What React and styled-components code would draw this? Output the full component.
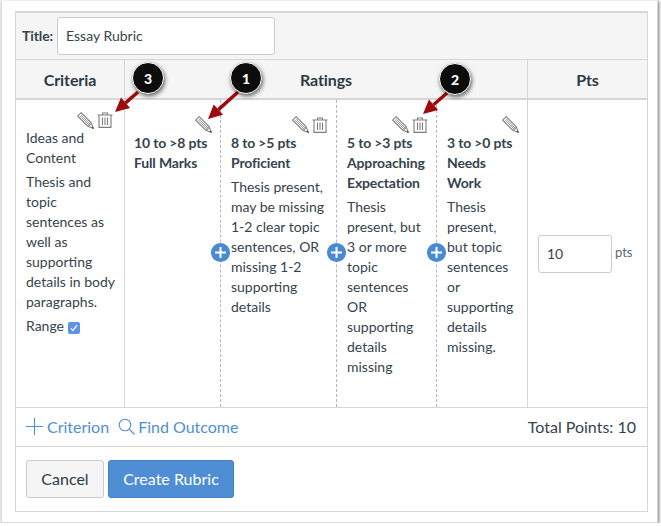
import React from 'react'
import styled, { createGlobalStyle } from 'styled-components'

const GlobalStyle = createGlobalStyle`
  html, body {
    margin: 0;
    padding: 0;
    background: #fff;
    font-family: Lato, "Open Sans", sans-serif;
    color: #36434d;
  }
`

const Frame = styled.div`
  position: relative;
  box-sizing: border-box;
  width: 657px;
  height: 523px;
  margin-left: 1px;
  padding: 10px 9px 10px 13px;
  background: #fff;
  border: 1px solid #d9d9d9;
  border-top-color: #eee;
  box-shadow: 1px 1px 3px rgba(0, 0, 0, 0.55);
`

const Form = styled.div`
  box-sizing: border-box;
  width: 633px;
  height: 501px;
  border: 1px solid #d4d6d8;
  border-top-width: 2px;
  display: flex;
  flex-direction: column;
`

const TitleBar = styled.div`
  height: 47px;
  flex: none;
  box-sizing: border-box;
  display: flex;
  align-items: center;
  gap: 4px;
  padding-left: 6px;
  background: #f5f5f5;
  border-bottom: 1px solid #d4d6d8;
`

const TitleLabel = styled.label`
  font-size: 14px;
  font-weight: 700;
  letter-spacing: -0.1px;
  padding-bottom: 2px;
`

const TextInput = styled.div`
  box-sizing: border-box;
  width: ${({ $w }) => $w}px;
  height: 38px;
  padding: 0 0 2px 8px;
  display: flex;
  align-items: center;
  background: #fff;
  border: 1px solid #c7cdd1;
  border-radius: 3px;
  font-size: 14px;
`

const Columns = styled.div`
  display: grid;
  grid-template-columns: 108px 403px 1fr;
  flex: none;
`

const Head = styled.div`
  height: 40px;
  display: flex;
  align-items: center;
  justify-content: center;
  background: #f5f5f5;
  color: #2d3b45;
  font-size: 16px;
  font-weight: 700;
  letter-spacing: -0.1px;
  border-bottom: 2px solid #d4d6d8;
  border-left: ${({ $first }) => ($first ? 'none' : '1px solid #d4d6d8')};
  box-sizing: border-box;
`

const Body = styled.div`
  height: 308px;
  box-sizing: border-box;
  border-left: ${({ $first }) => ($first ? 'none' : '1px solid #d4d6d8')};
  border-bottom: 1px solid #d4d6d8;
`

const CriteriaCell = styled(Body)`
  padding: 12px 8px 0 10px;
  font-size: 14px;
  line-height: 20px;
`

const CriteriaIcons = styled.div`
  display: flex;
  justify-content: flex-end;
  align-items: center;
  gap: 3px;
  height: 16px;
  padding-right: 3px;
`

const Para = styled.p`
  margin: 0 0 4px;
`

const RatingsRow = styled(Body)`
  display: grid;
  grid-template-columns: 95px 116px 100px 1fr;
`

const Rating = styled.div`
  position: relative;
  box-sizing: border-box;
  padding: 16px 8px 0 ${({ $first }) => ($first ? 9 : 10)}px;
  border-left: ${({ $first }) => ($first ? 'none' : '1px dashed #b4b8bb')};
  font-size: 14px;
  line-height: 20px;
`

const IconRow = styled.div`
  display: flex;
  justify-content: flex-end;
  align-items: center;
  gap: 3px;
  height: 17px;
`

const Bold = styled.div`
  font-weight: 700;
  letter-spacing: -0.15px;
`

const Desc = styled.div`
  margin-top: 4px;
`

const RangeRow = styled.div`
  display: flex;
  align-items: center;
  gap: 4px;
`

const Check = styled.span`
  width: 12px;
  height: 12px;
  margin-top: 3px;
  border-radius: 2px;
  background: #5b93e6;
  display: flex;
  align-items: center;
  justify-content: center;
`

const AddButton = styled.span`
  position: absolute;
  left: -10px;
  top: 143px;
  width: 19px;
  height: 19px;
  border-radius: 50%;
  background: #4a8ad4;
  display: flex;
  align-items: center;
  justify-content: center;
`

const PtsCell = styled(Body)`
  display: flex;
  align-items: flex-start;
  gap: 3px;
  padding: 135px 0 0 10px;
`

const PtsLabel = styled.span`
  font-size: 13px;
  line-height: 35px;
  color: #5a6872;
`

const Footer = styled.div`
  height: 39px;
  flex: none;
  display: flex;
  align-items: center;
  padding: 0 11px 2px 10px;
  border-bottom: 1px solid #d4d6d8;
  box-sizing: border-box;
`

const LinkBtn = styled.span`
  display: flex;
  align-items: center;
  gap: ${({ $gap }) => $gap}px;
  margin-right: 9px;
  color: #4f8fd6;
  font-size: 16px;
`

const Total = styled.span`
  margin-left: auto;
  font-size: 16px;
`

const Actions = styled.div`
  display: flex;
  gap: 4px;
  padding: 13px 0 0 10px;
`

const Btn = styled.button`
  box-sizing: border-box;
  height: 38px;
  width: ${({ $w }) => $w}px;
  padding: 0 0 2px;
  border-radius: 3px;
  font-family: inherit;
  font-size: 16px;
  background: ${({ $primary }) => ($primary ? '#4f8dd5' : '#f5f5f5')};
  color: ${({ $primary }) => ($primary ? '#fff' : '#2d3b45')};
  border: 1px solid ${({ $primary }) => ($primary ? '#4580c4' : '#c7cdd1')};
`

const Overlay = styled.svg`
  position: absolute;
  left: -2px;
  top: -1px;
  width: 661px;
  height: 526px;
  pointer-events: none;
`

const Badge = styled.span`
  position: absolute;
  left: ${({ $x }) => $x - 18}px;
  top: ${({ $y }) => $y - 17}px;
  width: 32px;
  height: 32px;
  box-sizing: border-box;
  border-radius: 50%;
  background: #0c0c0c;
  border: 1px solid #fff;
  box-shadow: 1px 2px 4px rgba(0, 0, 0, 0.6);
  color: #fff;
  font-size: 14px;
  font-weight: 900;
  display: flex;
  align-items: center;
  justify-content: center;
`

const Pencil = () => (
  <svg width="17" height="17" viewBox="0 0 17 17" fill="none" stroke="#7d7d7d" strokeWidth="1.1">
    <path d="M.7 4.2 4.2.7 14 10.5l2.4 5.9-5.9-2.4z" fill="#fff" />
    <path d="M5.2 4.2 14 13M4.2 5.2 13 14M2.6 5.6 5.6 2.6M10.8 13.8l3-3" strokeWidth="0.8" />
    <path d="M15 15l1.2 1.2" strokeWidth="1.5" stroke="#555" />
  </svg>
)

const Trash = () => (
  <svg width="16" height="16" viewBox="0 0 16 16" fill="none" stroke="#7d7d7d" strokeWidth="1.1">
    <path d="M.5 3h15M5.5 3V1h5v2" />
    <path d="M2 3v12.4h12V3" />
    <path d="M5.5 5.5v7.5M8 5.5v7.5M10.5 5.5v7.5" />
  </svg>
)

const PlusThin = () => (
  <svg width="17" height="17" viewBox="0 0 17 17" stroke="#4f8fd6" strokeWidth="1.1">
    <path d="M0 8.5h17M8.5 0v17" />
  </svg>
)

const SearchIcon = () => (
  <svg width="17" height="17" viewBox="0 0 17 17" fill="none" stroke="#4f8fd6" strokeWidth="1.1">
    <circle cx="7" cy="7" r="5.8" />
    <path d="M11.2 11.2 16.5 16.5" />
  </svg>
)

const WhitePlus = () => (
  <svg width="11" height="11" viewBox="0 0 11 11" stroke="#fff" strokeWidth="2">
    <path d="M0 5.5h11M5.5 0v11" />
  </svg>
)

const Tick = () => (
  <svg width="8" height="8" viewBox="0 0 8 8" fill="none" stroke="#fff" strokeWidth="1.3">
    <path d="M1 4.4 3 6.6 7 1.2" />
  </svg>
)

const ratings = [
  { range: '10 to >8 pts', name: 'Full Marks', desc: '', trash: false, first: true },
  {
    range: '8 to >5 pts',
    name: 'Proficient',
    desc: 'Thesis present, may be missing 1-2 clear topic sentences, OR missing 1-2 supporting details',
    trash: true,
    add: true,
  },
  {
    range: '5 to >3 pts',
    name: 'Approaching Expectation',
    desc: 'Thesis present, but 3 or more topic sentences OR supporting details missing',
    trash: true,
    add: true,
  },
  {
    range: '3 to >0 pts',
    name: 'Needs Work',
    desc: 'Thesis present, but topic sentences or supporting details missing.',
    trash: false,
    add: true,
  },
]

// x1,y1 -> tip of the red callout arrows
const arrows = [
  [138, 92, 115, 112],
  [238, 92, 208, 119],
  [447, 93, 423, 114],
]

const Arrow = ({ a }) => {
  const [x1, y1, x2, y2] = a
  const ang = Math.atan2(y2 - y1, x2 - x1)
  const ux = Math.cos(ang)
  const uy = Math.sin(ang)
  const bx = x2 - ux * 14
  const by = y2 - uy * 14
  const p = `${x2},${y2} ${bx - uy * 7},${by + ux * 7} ${bx + uy * 7},${by - ux * 7}`
  return (
    <g>
      <line x1={x1} y1={y1} x2={bx} y2={by} stroke="#9e0b0f" strokeWidth="3.5" />
      <polygon points={p} fill="#9e0b0f" />
    </g>
  )
}

export default function App() {
  return (
    <>
      <GlobalStyle />
      <Frame>
        <Form>
          <TitleBar>
            <TitleLabel>Title:</TitleLabel>
            <TextInput $w={218}>Essay Rubric</TextInput>
          </TitleBar>
          <Columns>
            <Head $first>Criteria</Head>
            <Head>Ratings</Head>
            <Head>Pts</Head>

            <CriteriaCell $first>
              <CriteriaIcons>
                <Pencil />
                <Trash />
              </CriteriaIcons>
              <Para>Ideas and Content</Para>
              <Para>Thesis and topic sentences as well as supporting details in body paragraphs.</Para>
              <RangeRow>
                Range
                <Check>
                  <Tick />
                </Check>
              </RangeRow>
            </CriteriaCell>

            <RatingsRow>
              {ratings.map((r) => (
                <Rating key={r.range} $first={r.first}>
                  <IconRow>
                    <Pencil />
                    {r.trash && <Trash />}
                  </IconRow>
                  <Bold>{r.range}</Bold>
                  <Bold>{r.name}</Bold>
                  {r.desc && <Desc>{r.desc}</Desc>}
                  {r.add && (
                    <AddButton>
                      <WhitePlus />
                    </AddButton>
                  )}
                </Rating>
              ))}
            </RatingsRow>

            <PtsCell>
              <TextInput $w={74}>10</TextInput>
              <PtsLabel>pts</PtsLabel>
            </PtsCell>
          </Columns>

          <Footer>
            <LinkBtn $gap={4}>
              <PlusThin />
              Criterion
            </LinkBtn>
            <LinkBtn $gap={3}>
              <SearchIcon />
              Find Outcome
            </LinkBtn>
            <Total>Total Points: 10</Total>
          </Footer>

          <Actions>
            <Btn $w={78}>Cancel</Btn>
            <Btn $w={126} $primary>
              Create Rubric
            </Btn>
          </Actions>
        </Form>

        <Overlay viewBox="0 0 661 526">
          {arrows.map((a) => (
            <Arrow key={a[0]} a={a} />
          ))}
        </Overlay>
        <Badge $x={148} $y={78}>3</Badge>
        <Badge $x={246} $y={78}>1</Badge>
        <Badge $x={455} $y={79}>2</Badge>
      </Frame>
    </>
  )
}
